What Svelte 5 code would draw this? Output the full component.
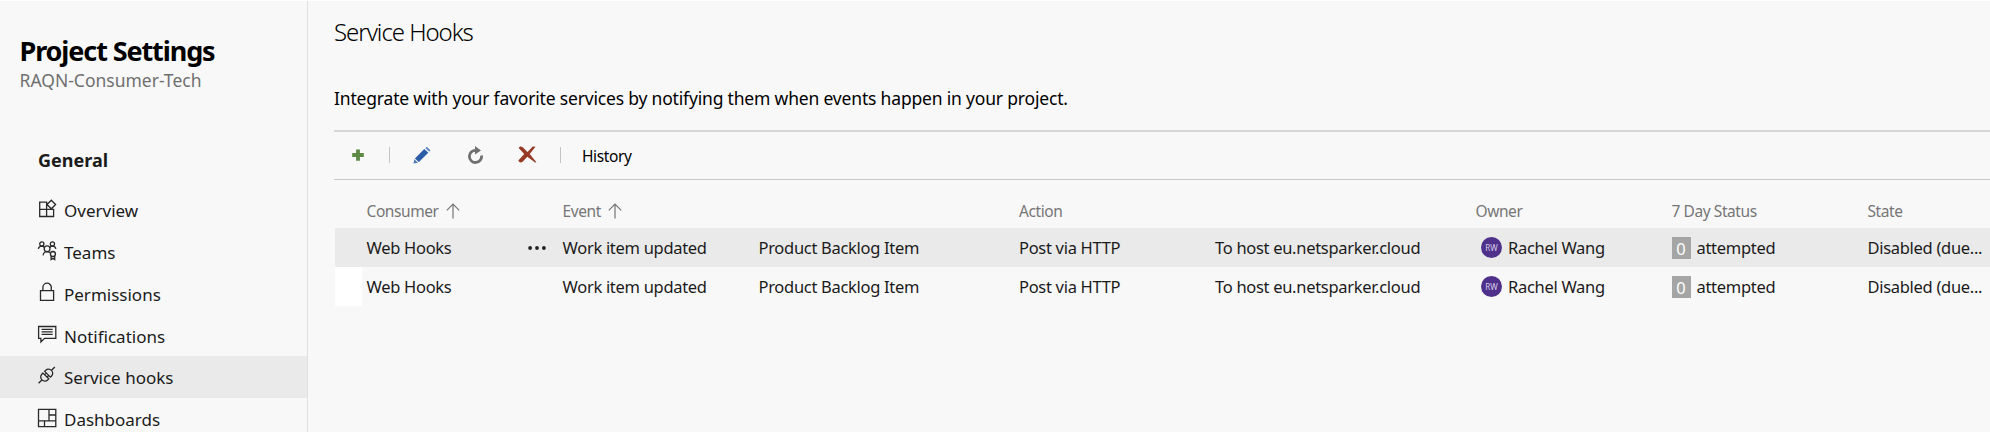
<script>
  const nav = ['Overview', 'Teams', 'Permissions', 'Notifications', 'Service hooks', 'Dashboards'];
  const rows = [{ active: true }, { active: false }];
</script>

{#snippet navIcon(name)}
  <svg class="nav-icon" viewBox="0 0 20 20">
    {#if name === 'Overview'}
      <path d="M9.6 10.3V3.1H2.7V17.5H16.6V10.3H2.7M9.6 10.3V17.5M14.3 1.2L18.6 5.5L14.3 9.8L10 5.5Z" />
    {:else if name === 'Teams'}
      <circle cx="4.8" cy="3" r="2.1" />
      <circle cx="15.4" cy="3" r="2.1" />
      <circle cx="10.1" cy="7.7" r="2.9" />
      <path d="M1.3 7.8Q2 5.1 4.8 5.1Q6.6 5.2 7.4 6.6M18.9 7.8Q18.2 5.1 15.4 5.1Q13.6 5.2 12.8 6.6M6 14.4Q6.6 10.7 10.1 10.6Q11.8 10.7 12.8 11.8" />
      <circle cx="15.9" cy="13" r="2.5" />
      <path d="M14.1 14.8V18.6L15.9 17.4L17.7 18.6V14.8" />
    {:else if name === 'Permissions'}
      <path d="M3.5 8.6H16.6V18.4H3.5ZM5.9 8.6V5.4A4.2 4.2 0 0 1 14.3 5.4V8.6" />
    {:else if name === 'Notifications'}
      <path d="M1.6 2.5H18.8V14.3H7.6L3.9 17.9V14.3H1.6ZM4.6 5.4H15.7M4.6 7.9H15.7M4.6 10.4H15.7" />
    {:else if name === 'Service hooks'}
      <g transform="translate(9.7 9.1) rotate(-45)">
        <path d="M-11.5 0H-6.5M11.5 0H6.5M-1.2 -4.1H-2.8A3.9 4.1 0 0 0 -2.8 4.1H-1.2ZM1.2 -4.1H2.8A3.9 4.1 0 0 1 2.8 4.1H1.2ZM-1.4 -1.7H1.4M-1.4 1.7H1.4" />
      </g>
    {:else}
      <path d="M1.5 1.3H18.8V18.6H1.5ZM12 1.3V12.8M12 7H18.8M1.5 12.8H18.8M7.5 12.8V18.6" />
    {/if}
  </svg>
{/snippet}

{#snippet arrow()}
  <svg class="arrow" viewBox="0 0 14 16"><path d="M7 15.5V1M0.8 7.3L7 1L13.2 7.3" /></svg>
{/snippet}

<div class="page">
  <aside>
    <h1>Project Settings</h1>
    <div class="project">RAQN-Consumer-Tech</div>
    <h2>General</h2>
    <nav>
      {#each nav as item}
        <div class="nav-item" class:selected={item === 'Service hooks'}>
          {@render navIcon(item)}
          <span>{item}</span>
        </div>
      {/each}
    </nav>
  </aside>

  <main>
    <h3>Service Hooks</h3>
    <p>Integrate with your favorite services by notifying them when events happen in your project.</p>
    <div class="toolbar">
      <svg class="add" viewBox="0 0 12 12"><path d="M4.1 0.4H7.9V4.1H11.8V7.9H7.9V11.8H4.1V7.9H0.2V4.1H4.1Z" fill="#5d8a45" /></svg>
      <i class="sep"></i>
      <svg class="edit" viewBox="0 0 18 18">
        <path d="M11.3 3L15.3 6.8L5.9 16.1L1.9 12.4Z" fill="#2a5da5" />
        <path d="M12.3 2L13.8 0.7L17.5 4.3L16.2 5.8Z" fill="#5f89c0" />
        <path d="M1.3 13.3L5 16.7L0.5 17.5Z" fill="#4d79b5" />
      </svg>
      <svg class="refresh" viewBox="0 0 17 18">
        <path d="M8.8 4.3A6.1 6.1 0 1 0 14.5 9.4" fill="none" stroke="#707070" stroke-width="2.8" />
        <path d="M8 0L14 4.5L8 8.4Z" fill="#707070" />
      </svg>
      <svg class="delete" viewBox="0 0 19 17">
        <path d="M0.7 1.9Q2.4 -0.6 5 1.6L9.5 6.1L14.8 0.6L17.5 0.7L11.7 8L18.4 16.2L17.1 16.6L9.3 10.8L4.4 16.1Q1.5 17.4 0.3 14.5L6.2 8Z" fill="#963a26" />
      </svg>
      <i class="sep"></i>
      <span class="history">History</span>
    </div>

    <div class="grid">
      <div class="row head">
        <span></span>
        <span class="sort">Consumer {@render arrow()}</span>
        <span class="sort">Event {@render arrow()}</span>
        <span></span>
        <span>Action</span>
        <span></span>
        <span>Owner</span>
        <span>7 Day Status</span>
        <span>State</span>
      </div>
      {#each rows as row}
        <div class="row" class:active={row.active}>
          <span class="gutter"></span>
          <span class="consumer">Web Hooks
            {#if row.active}
              <svg class="dots" viewBox="0 0 18 4"><circle cx="2.1" cy="2" r="1.9" /><circle cx="9" cy="2" r="1.9" /><circle cx="15.9" cy="2" r="1.9" /></svg>
            {/if}
          </span>
          <span>Work item updated</span>
          <span>Product Backlog Item</span>
          <span>Post via HTTP</span>
          <span>To host eu.netsparker.cloud</span>
          <span class="owner"><b class="avatar">RW</b>Rachel Wang</span>
          <span class="status"><b class="count">0</b>attempted</span>
          <span>Disabled (due...</span>
        </div>
      {/each}
    </div>
  </main>
</div>

<style>
  :global(body) { background: #f8f8f8; overflow: hidden; }
  .page {
    box-sizing: border-box;
    display: flex;
    width: 1990px;
    height: 432px;
    overflow: hidden;
    border-top: 1px solid #fff;
    background: #f8f8f8;
    color: #1b1b1b;
    font-family: "Noto Sans", "Open Sans", sans-serif;
  }
  h1, h2, h3, p { margin: 0; white-space: nowrap; }
  aside { box-sizing: border-box; flex: none; width: 308px; border-right: 1px solid #e0e0e0; padding-top: 32px; }
  h1 { padding-left: 19.5px; font-size: 27px; line-height: 36px; letter-spacing: -1.1px; color: #000; }
  .project { padding-left: 19.5px; margin-top: -1px; font-size: 17.5px; line-height: 24px; color: #707070; }
  h2 { padding: 55px 0 0 38px; font-size: 18px; line-height: 26px; }
  nav { padding-top: 16px; }
  .nav-item { box-sizing: border-box; display: flex; align-items: center; height: 41.75px; padding-left: 37px; font-size: 17px; }
  .nav-item.selected { background: #eaeaea; }
  .nav-item span { margin-left: 7px; padding-top: 2px; }
  .nav-icon { width: 20px; height: 20px; margin-bottom: 2px; fill: none; stroke: #2a2a2a; stroke-width: 1.3; }

  main { flex: 1; min-width: 0; padding-left: 26px; }
  h3 { padding-top: 14px; font-size: 24px; font-weight: 300; line-height: 34px; letter-spacing: -1.05px; color: #000; }
  p { padding-top: 36px; font-size: 17.5px; line-height: 26px; letter-spacing: -0.18px; color: #000; }
  .toolbar {
    box-sizing: border-box;
    display: flex;
    align-items: center;
    height: 50px;
    margin-top: 19px;
    padding: 0 0 2px 18px;
    border-top: 2px solid #d6d6d6;
    border-bottom: 1px solid #c8c8c8;
    color: #000;
  }
  .add { width: 12px; height: 12px; }
  .sep { width: 1px; height: 16px; margin-left: 25px; background: #c4c4c4; }
  .edit { width: 18px; height: 18px; margin-left: 23px; }
  .refresh { width: 17px; height: 18px; margin-left: 36px; }
  .delete { width: 19px; height: 17px; margin: 0 7px 1px 34px; }
  .delete + .sep { margin-left: 16px; }
  .history { margin-left: 21px; padding-top: 2px; font-size: 15.5px; letter-spacing: -0.4px; }

  .grid { padding: 14px 0 0 1px; }
  .row {
    display: grid;
    grid-template-columns: 31.5px 196px 196px 260.5px 196px 260.5px 196px 196px 1fr;
    height: 39px;
    align-items: center;
    font-size: 16.5px;
    line-height: 22px;
    letter-spacing: -0.3px;
    white-space: nowrap;
  }
  .row > span { padding-top: 1px; }
  .row.head { height: 34px; font-size: 15.5px; letter-spacing: -0.42px; color: #767676; }
  .row.head > span { padding-top: 0; }
  .row.active { background: #eaeaea; }
  .sort { display: flex; align-items: center; }
  .arrow { width: 14px; height: 16px; margin-left: 7px; margin-bottom: 1px; fill: none; stroke: #767676; stroke-width: 1.2; }
  .row > .gutter { width: 27px; height: 39px; padding: 0; background: #fff; }
  .active > .gutter { background: none; }
  .consumer { display: flex; align-items: center; justify-content: space-between; }
  .dots { width: 18px; height: 4px; margin: 0 17px 0 0; fill: #222; }
  .owner, .status { display: flex; align-items: center; }
  .avatar {
    width: 21px;
    height: 21px;
    margin: -1px 6px 0 5.5px;
    border-radius: 50%;
    background: #4f318b;
    color: #d7cde8;
    font-size: 8px;
    font-weight: 400;
    line-height: 21px;
    letter-spacing: 0;
    text-align: center;
  }
  .count {
    width: 19px;
    height: 22px;
    margin: -1px 6px 0 0;
    background: #a5a5a5;
    color: #fff;
    font-weight: 400;
    line-height: 24px;
    letter-spacing: 0;
    text-align: center;
  }
</style>
